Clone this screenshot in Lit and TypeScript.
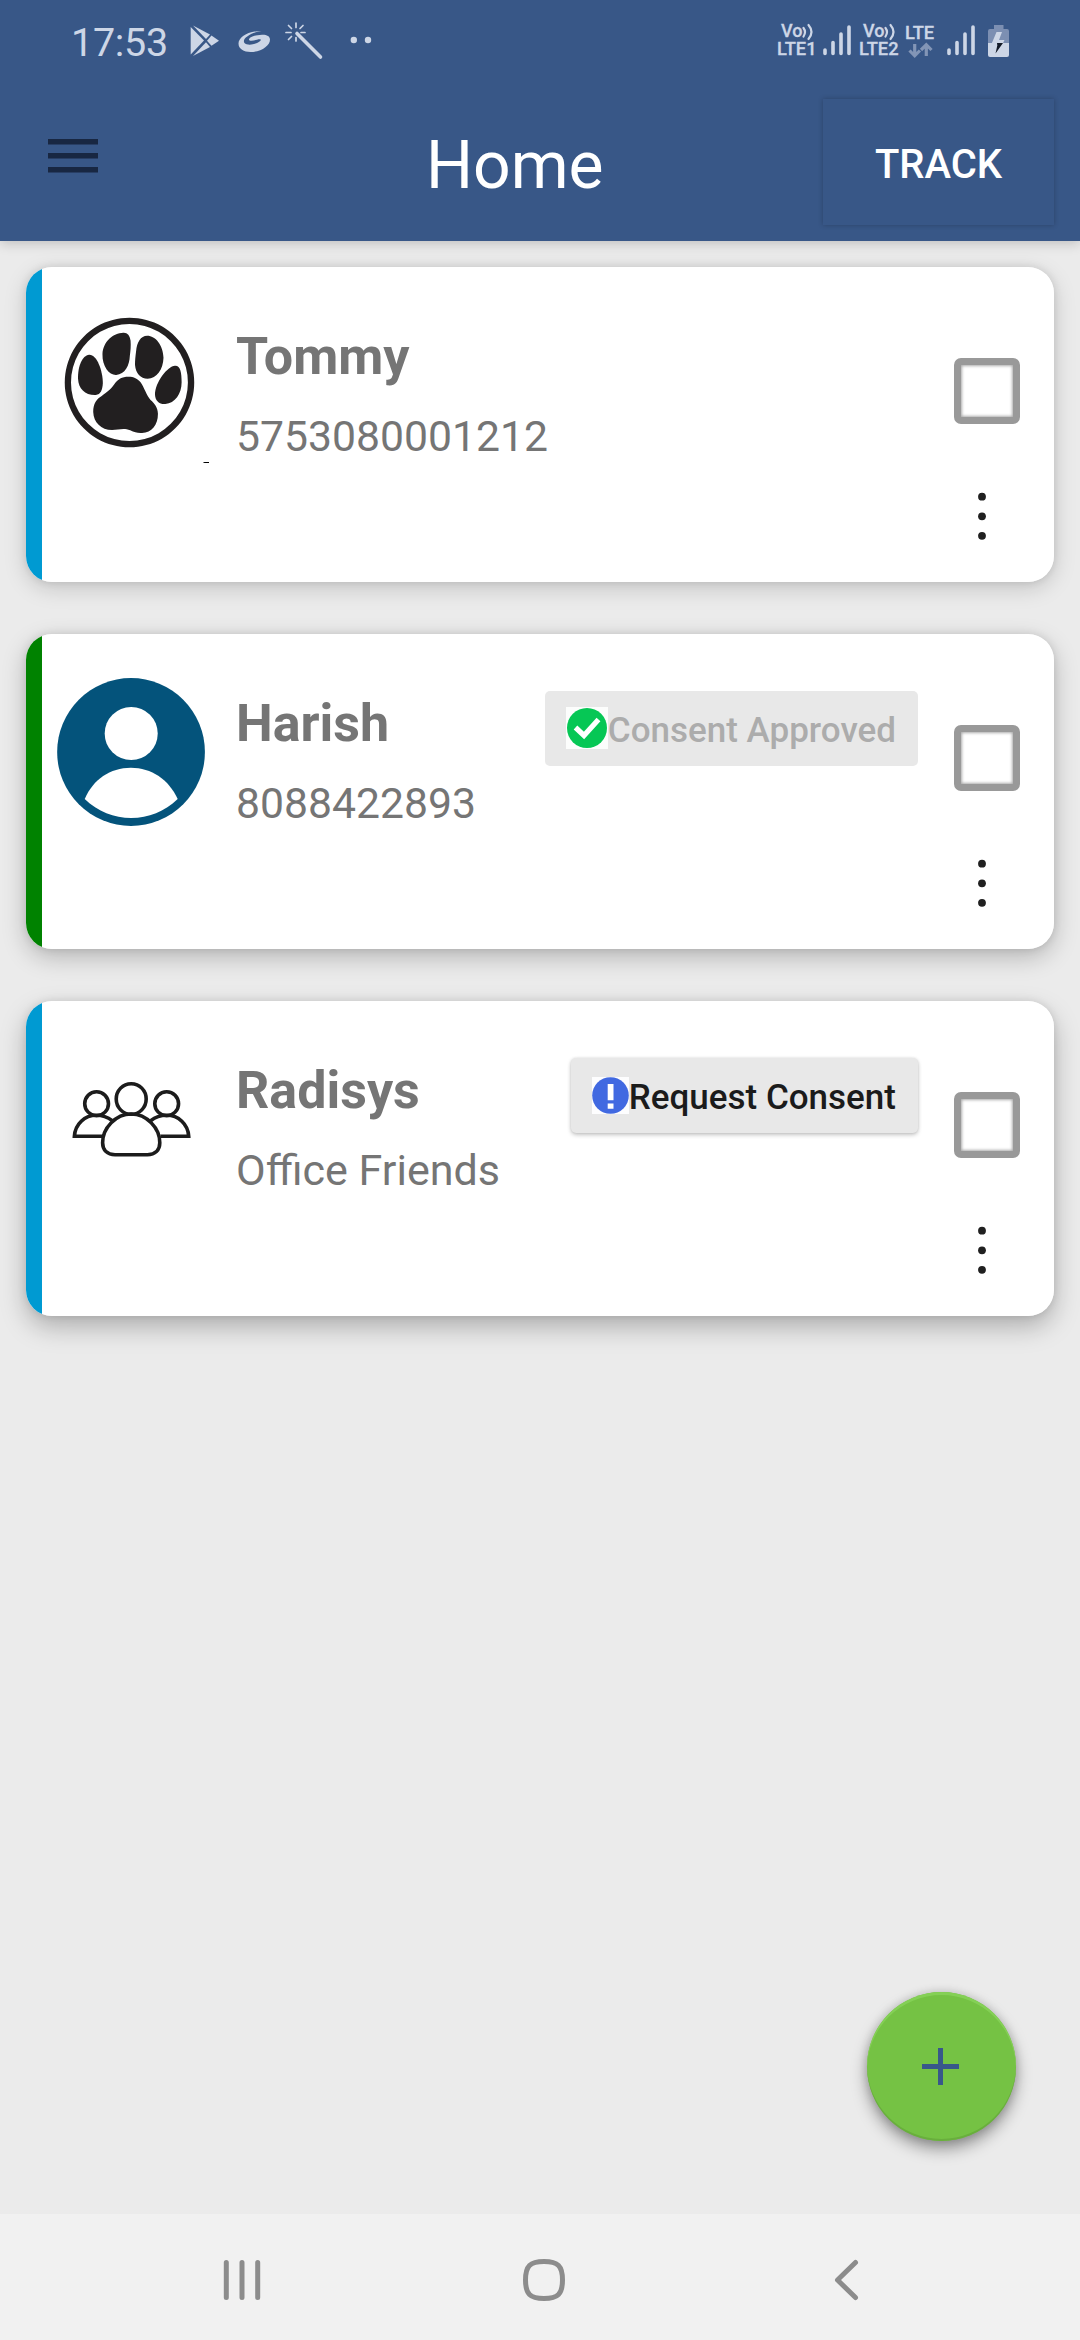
import { LitElement, html, css, svg, nothing } from "lit";
import { customElement, property } from "lit/decorators.js";
import { classMap } from "lit/directives/class-map.js";

type Kind = "pet" | "person" | "group";
type Consent = "approved" | "request";

interface Contact {
  name: string;
  detail: string;
  kind: Kind;
  consent?: Consent;
}

const CONTACTS: Contact[] = [
  { name: "Tommy", detail: "5753080001212", kind: "pet" },
  { name: "Harish", detail: "8088422893", kind: "person", consent: "approved" },
  { name: "Radisys", detail: "Office Friends", kind: "group", consent: "request" },
];

const petAvatar = html`<svg viewBox="143.3 171 421.7 468" preserveAspectRatio="none">
  <g fill="#221f20">
    <path fill-rule="evenodd" d="M350 203a175 194.500 0 1 0 .1 0zM350 222a158 175.500 0 1 1-.1 0z" />
    <path d="M241 314C222 316 210 350 211 386C212 416 230 436 259 435C272 434 277 420 278 400C278 362 262 313 241 314Z" />
    <path d="M333 248C306 249 279 274 277 312C276 350 296 376 314 375C338 373 350 346 351 318C353 300 354 290 353 272C351 255 344 247 333 248Z" />
    <path d="M398 257C380 257 370 277 368 303C366 320 365 332 365 345C367 370 380 386 399 386C424 385 441 358 442 323C441 285 420 257 398 257Z" />
    <path d="M473 347C453 348 419 397 419 434C420 452 430 463 447 462C473 460 491 432 491 397C491 368 488 346 473 347Z" />
    <path d="M347 380C330 380 318 387 309 403C298 420 289 427 275 438C261 447 252 461 252 486C253 517 273 540 303 540C320 540 334 533 352 541C364 547 372 550 384 549C410 547 427 526 427 491C426 471 418 461 407 450C396 436 390 413 380 397C372 386 362 380 347 380Z" />
  </g>
  <path d="M549 637L554 636H565V639H551Z" fill="#000" />
</svg>`;

const personAvatar = html`<svg viewBox="153.9 162 453 468" preserveAspectRatio="none">
  <ellipse cx="380.500" cy="396" rx="214.500" ry="222" fill="#04537b" />
  <ellipse cx="381" cy="340.500" rx="77" ry="79.500" fill="#fff" />
  <path d="M246 537C270 478 320 443 380 443C440 443 490 478 516 537C478 575 431 594 381 594C331 594 284 575 246 537Z" fill="#fff" />
</svg>`;

const groupAvatar = html`<svg viewBox="153.9 183 453 468" preserveAspectRatio="none">
  <g fill="none" stroke="#1c1c1c" stroke-width="10.500">
    <ellipse cx="280.500" cy="371" rx="34.500" ry="36" />
    <ellipse cx="484" cy="371" rx="34.500" ry="36" />
    <path d="M299 469H216C218 432 246 406 280 406C297 406 313 412 326 422" />
    <path d="M466 469H548C546 432 518 406 484 406C467 406 450 412 438 422" />
    <ellipse cx="381" cy="357" rx="43.500" ry="46" />
    <path d="M381 402C336 402 298 444 298 488C298 511 312 524 334 524H428C450 524 464 511 464 488C464 444 426 402 381 402Z" />
  </g>
</svg>`;

const AVATARS = { pet: petAvatar, person: personAvatar, group: groupAvatar };

const approvedIcon = html`<svg width="42" height="42" viewBox="0 0 42 42">
  <rect width="42" height="42" fill="#fcfdfc" />
  <circle cx="21" cy="21" r="20" fill="#06c755" />
  <path d="M9.500 20.500L18 28.500L32.500 12.500" fill="none" stroke="#fff" stroke-width="5.200" />
</svg>`;

const requestIcon = html`<svg width="37" height="37" viewBox="0 0 37 37">
  <rect width="37" height="37" fill="#fdfdfe" />
  <circle cx="18.500" cy="18.500" r="18.300" fill="#4169e1" />
  <path d="M15.700 7h5.800v16.300h-5.800zM15.700 26.500h5.800v5.300h-5.800z" fill="#fff" />
</svg>`;

const signalBars = html`<svg class="signal" width="28" height="90" viewBox="0 0 28 90">
  <g stroke="#cdd6e6" stroke-width="3.600" stroke-linecap="round">
    <path d="M2 50v3.500M10 42.500v11M18 34v19.500M26 27v26.500" />
  </g>
</svg>`;

const volte = (n: number) => html`<svg class="volte" width="40" height="90" viewBox="0 0 40 90">
  <text x="4" y="37" font-size="18" font-weight="500">Vo</text>
  <g fill="none" stroke="#cdd6e6" stroke-width="2.200" stroke-linecap="round">
    <path d="M26.500 28q3 4 0 8.500" />
    <path d="M31.500 25q6 7 0 14" />
  </g>
  <text x="0" y="55" font-size="18.300" font-weight="500">LTE${svg`${n}`}</text>
</svg>`;

@customElement("status-bar")
class StatusBar extends LitElement {
  static styles = css`
    :host { display: flex; height: 90px; align-items: flex-start; color: #cdd6e6; padding-left: 71px; }
    svg { display: block; flex: none; }
    text { fill: #cdd6e6; stroke: #cdd6e6; stroke-width: 0.300px; }
    .clock { width: 97px; font-size: 39.500px; line-height: 85px; letter-spacing: -0.300px; }
    .notices { margin-left: 20px; }
    .radio { display: flex; margin-left: auto; padding-right: 71px; }
    .volte { margin-right: 6.500px; }
    .second { margin-left: 7.500px; }
    .data { margin: 0 10px 0 0; }
    .battery { margin-left: 13px; }
  `;
  render() {
    return html`
      <span class="clock">17:53</span>
      <svg class="notices" width="190" height="90" viewBox="188 0 190 90">
        <g fill="#cdd6e6">
          <path d="M190.700 27L204 40.500L190.700 54.500Z" />
          <path d="M193 25.500L210 34.500L206 39Z" />
          <path d="M193 56L210 47L206 42.300Z" />
          <path d="M211.500 35.500L219 40.700L211.500 45.800L207 40.700Z" />
          <path d="M261.500 31C247 31 238.500 38 238.500 43.500C238.500 49 244 52 250.500 52C261 52 270 46 270 39.500C270 36 266.500 34.500 262 34.700C254 35 248.500 37.500 249 39.700C249.500 41.500 254 40.500 257 39.700C260.500 38.800 262 39.600 259.500 41.600C256 44.600 247 46 244.500 43C241.500 39 250 32.500 261.500 31Z" />
          <circle cx="353.800" cy="40" r="3.200" />
          <circle cx="368" cy="40" r="3.200" />
        </g>
        <g stroke="#cdd6e6" stroke-linecap="round">
          <path d="M297 33.500L320.500 57" stroke-width="3.600" />
          <path d="M296 23v4.500M296 37.500v3.500M286 32.500h5M301 32.500h4M288.500 25.500l3 3M303 25.500l-3 3M288.500 39.500l3-3" stroke-width="1.700" />
        </g>
      </svg>
      <div class="radio">
        ${volte(1)}${signalBars}
        <span class="second"></span>${volte(2)}
        <svg class="data" width="32" height="90" viewBox="905 0 32 90">
          <text x="905" y="38.700" font-size="18.300" font-weight="500">LTE</text>
          <path d="M914.700 44v11M909.500 50.500l5.200 5.300 5.200-5.300M926.300 56v-11M921 50l5.300-5.300 5.200 5.300" fill="none" stroke="#8295b6" stroke-width="3.200" />
        </svg>
        ${signalBars}
        <svg class="battery" width="21" height="90" viewBox="988 0 21 90">
          <path d="M994 25h9.500v4h3.500q2 0 2 2v12h-21v-12q0-2 2-2h4z" fill="#7c8fb2" />
          <path d="M988 43h21v12q0 2-2 2h-17q-2 0-2-2z" fill="#cdd6e6" />
          <path d="M996.500 32h5.500l-3 8h5.500l-2 4h-11z" fill="#cdd6e6" />
          <path d="M997 43h6l-7.500 10.500l1.800-8z" fill="#141b28" />
        </svg>
      </div>
    `;
  }
}

@customElement("contact-card")
class ContactCard extends LitElement {
  @property({ attribute: false }) contact!: Contact;

  static styles = css`
    :host { display: block; height: 315px; border-radius: 26px; }
    .card {
      box-sizing: border-box; display: flex; height: 315px; border-radius: 26px;
      overflow: hidden; background: #fff; color: #757575;
    }
    .stripe { width: 16px; flex: none; background: #009ad2; }
    .person .stripe { background: #008200; }
    .avatar { width: 156px; height: 156px; margin: 40px 0 0 11px; flex: none; }
    .avatar svg { display: block; width: 156px; height: 156px; }
    .info { margin-left: 27px; padding-top: 59px; white-space: nowrap; }
    .name { font-size: 52px; line-height: 62px; font-weight: 700; }
    .detail { font-size: 42.700px; line-height: 50px; margin-top: 23px; }
    .group .detail { font-size: 43.100px; line-height: 52px; }
    .consent {
      box-sizing: border-box; display: flex; align-items: center; height: 75px; flex: none;
      margin: 57px 0 0 auto; padding: 0 22px 0 21px; border-radius: 5px;
      background: #e8e8e8; color: #acacac; font-size: 35px; font-weight: 500; white-space: nowrap;
    }
    .consent svg { display: block; flex: none; margin-bottom: 2px; }
    .label { line-height: 40px; padding-top: 5px; }
    .request { color: #1b1b1b; box-shadow: 0 2px 4px rgba(0, 0, 0, 0.22), 0 0 3px rgba(0, 0, 0, 0.1); }
    .request svg { margin-bottom: 0; }
    .actions { display: flex; flex-direction: column; width: 100px; flex: none; margin-left: auto; padding: 91px 0 0 0; }
    .consent + .actions { margin-left: 36px; }
    .check {
      box-sizing: border-box; width: 66px; height: 66px; border: 7px solid #999; border-radius: 7px;
      box-shadow: inset 0 0 3px 1px #aaa;
    }
    .more { display: block; margin: 65px 0 0 18px; }
  `;
  render() {
    const { name, detail, kind, consent } = this.contact;
    return html`
      <div class=${classMap({ card: true, [kind]: true })}>
        <div class="stripe"></div>
        <div class="avatar">${AVATARS[kind]}</div>
        <div class="info">
          <div class="name">${name}</div>
          <div class="detail">${detail}</div>
        </div>
        ${consent
          ? html`<div class=${classMap({ consent: true, [consent]: true })}>
              ${consent === "approved" ? approvedIcon : requestIcon}
              <span class="label">${consent === "approved" ? "Consent Approved" : "Request Consent"}</span>
            </div>`
          : nothing}
        <div class="actions">
          <div class="check"></div>
          <svg class="more" width="20" height="54" viewBox="0 0 20 54" fill="#202020">
            <circle cx="10" cy="7.700" r="3.900" />
            <circle cx="10" cy="27.300" r="3.900" />
            <circle cx="10" cy="46.800" r="3.900" />
          </svg>
        </div>
      </div>
    `;
  }
}

@customElement("app-root")
class AppRoot extends LitElement {
  static styles = css`
    :host {
      display: flex; flex-direction: column; position: relative; width: 1080px; height: 2340px;
      overflow: hidden; background: #ebebeb; font-family: Roboto, "Liberation Sans", sans-serif;
    }
    .header { height: 241px; flex: none; background: #385787; box-shadow: 0 2px 12px rgba(0, 0, 0, 0.2); }
    .toolbar { display: grid; grid-template-columns: 426px 1fr 231px; padding-right: 26px; height: 151px; color: #fff; }
    .menu { display: block; margin: 49px 0 0 48px; }
    .title { font-size: 66px; line-height: 80px; margin-top: 36px; font-weight: 400; }
    .track {
      display: flex; align-items: center; justify-content: center; height: 126px; margin-top: 9px;
      font-size: 40px; font-weight: 500; box-shadow: 0 0 5px rgba(0, 0, 0, 0.24);
    }
    .track span { line-height: 46px; padding-top: 5px; }
    .list { display: flex; flex-direction: column; gap: 52px; flex: 1; padding: 26px 26px 0; }
    .card { box-shadow: 0 6px 22px rgba(0, 0, 0, 0.17), 0 0 8px rgba(0, 0, 0, 0.1); }
    .card:nth-child(2) { box-shadow: 0 8px 24px rgba(0, 0, 0, 0.23), 0 0 8px rgba(0, 0, 0, 0.1); }
    .card:nth-child(3) { box-shadow: 0 11px 26px rgba(0, 0, 0, 0.26), 0 0 8px rgba(0, 0, 0, 0.1); }
    .fab {
      position: absolute; left: 866.500px; top: 1992px; width: 149px; height: 149px; border-radius: 50%;
      display: flex; align-items: center; justify-content: center; background: #75c244;
      box-shadow: inset 0 3px 0 #84d055, inset 0 -2px 0 #69ae3d, 0 8px 16px rgba(0, 0, 0, 0.38), 0 0 10px rgba(0, 0, 0, 0.14);
    }
    .nav { display: flex; height: 126px; flex: none; background: #f1f1f1; }
    .nav svg { display: block; }
  `;
  render() {
    return html`
      <div class="header">
        <status-bar></status-bar>
        <div class="toolbar">
          <svg class="menu" width="50" height="34" viewBox="0 0 50 34">
            <path d="M0 0h50v5.500H0zM0 14h50v5.500H0zM0 28h50v5.500H0z" fill="#182742" />
          </svg>
          <div class="title">Home</div>
          <div class="track"><span>TRACK</span></div>
        </div>
      </div>
      <div class="list">
        ${CONTACTS.map((c) => html`<contact-card class="card" .contact=${c}></contact-card>`)}
      </div>
      <div class="nav">
        <svg width="1080" height="126" viewBox="0 2214 1080 126" fill="none" stroke="#8c8c8c" stroke-width="5" stroke-linecap="round">
          <path d="M226.300 2262.500v35M242 2262.500v35M257.700 2262.500v35" />
          <path d="M544 2261.500C558 2261.500 562.500 2266 562.500 2280S558 2298.500 544 2298.500S525.500 2294 525.500 2280S530 2261.500 544 2261.500Z" />
          <path d="M855.500 2262.500L837.500 2280L855.500 2297.500" stroke-linejoin="round" />
        </svg>
      </div>
      <div class="fab">
        <svg width="38" height="38" viewBox="0 0 38 38"><path d="M18.500 0v37M0 18.500h37" stroke="#38578a" stroke-width="5" /></svg>
      </div>
    `;
  }
}
